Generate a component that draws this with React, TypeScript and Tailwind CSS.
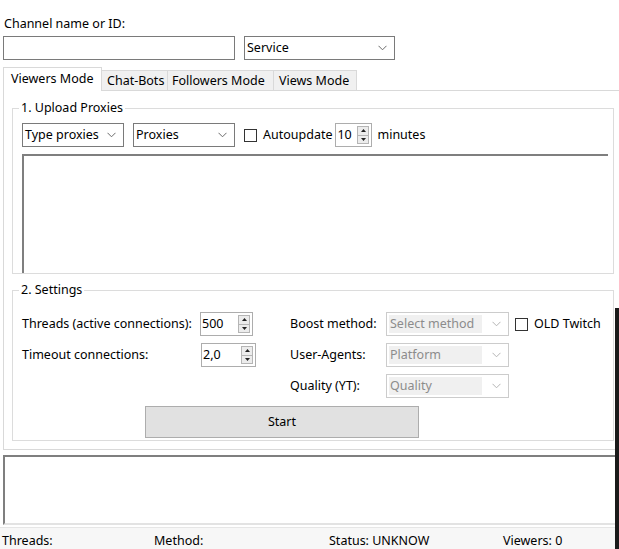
import React from "react"

const font = { fontFamily: "'Noto Sans', 'Open Sans', sans-serif" }

function Chevron({ color = "#6b6b6b" }: { color?: string }) {
  return (
    <svg width="9" height="6" viewBox="0 0 9 6" className="shrink-0">
      <path d="M0.5 0.8 L4.5 4.8 L8.5 0.8" fill="none" stroke={color} strokeWidth="1" />
    </svg>
  )
}

function Select({ label, width, disabled }: { label: string; width: string; disabled?: boolean }) {
  if (disabled) {
    return (
      <div className={`${width} h-[24px] border border-[#cccccc] bg-white flex items-center pl-[2px] pr-[7px]`}>
        <div className="flex-1 h-[18px] bg-[#f0f0f0] text-[#8c8c8c] leading-[18px] pl-[1px] mr-[10px] whitespace-nowrap">{label}</div>
        <Chevron color="#b4b4b4" />
      </div>
    )
  }
  return (
    <div className={`${width} h-[24px] border border-[#7a7a7a] bg-white flex items-center pl-[2px] pr-[7px]`}>
      <div className="flex-1 leading-[18px] whitespace-nowrap">{label}</div>
      <Chevron />
    </div>
  )
}

function Spinner({ value, width }: { value: string; width: string }) {
  return (
    <div className={`${width} h-[24px] border border-[#adadad] bg-white flex items-center pl-[1px] pr-[2px]`}>
      <div className="flex-1 leading-[18px]">{value}</div>
      <div className="flex flex-col w-[12px] h-[18px] border border-[#b5b5b5] bg-[#ececec]">
        <div className="flex-1 flex items-center justify-center border-b border-[#b5b5b5]">
          <svg width="5" height="3" viewBox="0 0 5 3"><path d="M0 3 L2.5 0 L5 3 Z" fill="#222" /></svg>
        </div>
        <div className="flex-1 flex items-center justify-center">
          <svg width="5" height="3" viewBox="0 0 5 3"><path d="M0 0 L2.5 3 L5 0 Z" fill="#222" /></svg>
        </div>
      </div>
    </div>
  )
}

function Checkbox() {
  return <div className="w-[13px] h-[13px] border border-[#333333] bg-white shrink-0" />
}

export default function App() {
  return (
    <div className="relative w-[619px] h-[549px] bg-white overflow-hidden text-[12.5px] text-black" style={font}>
      {/* Channel */}
      <div className="pt-[16px] pl-[4px] h-[32px] leading-[16px]">Channel name or ID:</div>
      <div className="flex mt-[4px] pl-[3px]">
        <div className="w-[232px] h-[24px] border border-[#7a7a7a] bg-white" />
        <div className="ml-[9px]">
          <Select label="Service" width="w-[151px]" />
        </div>
      </div>

      {/* Tabs */}
      <div className="flex items-end mt-[7px] pl-[3px] h-[23px] relative z-10 whitespace-nowrap">
        <div className="w-[99px] h-[24px] mb-[-1px] border border-b-0 border-[#d9d9d9] bg-white leading-[21px] pl-[7px]">
          Viewers Mode
        </div>
        <div className="h-[20px] border-t border-r border-[#d9d9d9] bg-[#f0f0f0] leading-[19px] pl-[5px] w-[66px]">Chat-Bots</div>
        <div className="h-[20px] border-t border-r border-[#d9d9d9] bg-[#f0f0f0] leading-[19px] pl-[4px] w-[106px]">Followers Mode</div>
        <div className="h-[20px] border-t border-r border-[#d9d9d9] bg-[#f0f0f0] leading-[19px] pl-[5px] w-[83px]">Views Mode</div>
      </div>

      {/* Tab panel */}
      <div className="ml-[3px] w-[640px] border border-[#d9d9d9] pt-[9px] pl-[8px] pb-[8px]">
        <fieldset className="w-[602px] border border-[#dcdcdc] pl-[9px] pb-0">
          <legend className="ml-[-3px] px-[2px] leading-[16px]">1. Upload Proxies</legend>
          <div className="flex items-center mt-[7px]">
            <Select label="Type proxies" width="w-[102px]" />
            <div className="ml-[9px]">
              <Select label="Proxies" width="w-[102px]" />
            </div>
            <div className="ml-[9px]"><Checkbox /></div>
            <span className="ml-[6px]">Autoupdate</span>
            <div className="ml-[3px]"><Spinner value="10" width="w-[37px]" /></div>
            <span className="ml-[5px]">minutes</span>
          </div>
          <div className="mt-[7px] w-[586px] h-[119px] border-t-2 border-l-2 border-[#7f7f7f] bg-white" />
        </fieldset>

        <fieldset className="mt-[8px] w-[602px] border border-[#dcdcdc] pl-[9px] pb-[2px]">
          <legend className="ml-[-3px] px-[2px] leading-[16px]">2. Settings</legend>
          <div className="flex mt-[14px]">
            <div className="w-[268px] flex flex-col gap-[7px]">
              <div className="flex items-center h-[24px]">
                <span className="w-[178px]">Threads (active connections):</span>
                <Spinner value="500" width="w-[53px]" />
              </div>
              <div className="flex items-center h-[24px]">
                <span className="w-[179px]">Timeout connections:</span>
                <Spinner value="2,0" width="w-[55px]" />
              </div>
            </div>
            <div className="flex flex-col gap-[7px]">
              <div className="flex items-center h-[24px]">
                <span className="w-[96px]">Boost method:</span>
                <Select label="Select method" width="w-[123px]" disabled />
                <div className="ml-[6px]"><Checkbox /></div>
                <span className="ml-[6px]">OLD Twitch</span>
              </div>
              <div className="flex items-center h-[24px]">
                <span className="w-[96px]">User-Agents:</span>
                <Select label="Platform" width="w-[123px]" disabled />
              </div>
              <div className="flex items-center h-[24px]">
                <span className="w-[96px]">Quality (YT):</span>
                <Select label="Quality" width="w-[123px]" disabled />
              </div>
            </div>
          </div>
          <div className="mt-[8px] ml-[123px] w-[274px] h-[32px] bg-[#e1e1e1] border border-[#adadad] flex items-center justify-center">
            Start
          </div>
        </fieldset>
      </div>

      {/* Log */}
      <div className="mt-[5px] ml-[3px] w-[640px] h-[70px] border-2 border-t-[#7f7f7f] border-l-[#7f7f7f] border-b-[#e3e3e3] border-r-0 bg-white" />

      {/* Status bar */}
      <div className="mt-[2px] h-[22px] bg-[#f7f7f7] border-t border-[#e6e6e6] flex pt-[5px] leading-[16px] whitespace-nowrap">
        <span className="ml-[2px] w-[152px]">Threads:</span>
        <span className="w-[175px]">Method:</span>
        <span className="w-[174px]">Status: UNKNOW</span>
        <span>Viewers: 0</span>
      </div>

      <div className="absolute right-0 top-[308px] bottom-0 w-[4px] bg-[#1a1a1a]" />
    </div>
  )
}
